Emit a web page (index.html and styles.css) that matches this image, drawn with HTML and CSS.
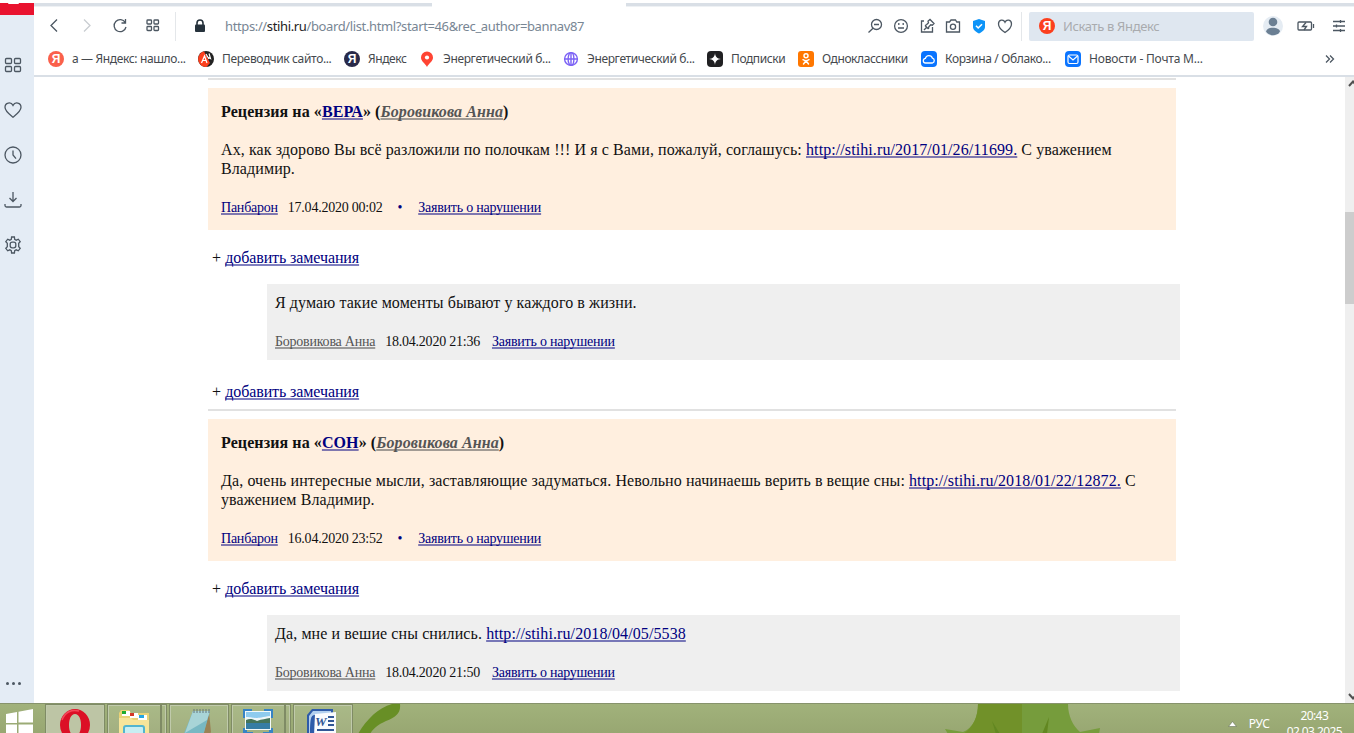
FILE: index.html
```
<!DOCTYPE html>
<html lang="ru">
<head>
    <meta charset="UTF-8">
    <title>Рецензии - Стихи.ру</title>
    <link rel="stylesheet" href="styles.css">
</head>
<body>
    <div class="browser">
        <!-- боковая панель -->
        <div class="sidebar">
            <div class="opera-btn"><span></span></div>
            <div class="side-icons">
                <svg class="icon" width="18" height="18" viewBox="0 0 18 18"><rect x="1.500" y="2.500" width="6" height="5" rx="1"/><rect x="10.500" y="2.500" width="6" height="5" rx="1"/><rect x="1.500" y="10.500" width="6" height="5" rx="1"/><rect x="10.500" y="10.500" width="6" height="5" rx="1"/></svg>
                <svg class="icon" width="18" height="18" viewBox="0 0 18 18"><path d="M9 16.200C6 13.800 1 10.300 1 6.300C1 1.400 7 .4 9 4.400C11 .4 17 1.400 17 6.300C17 10.300 12 13.800 9 16.200Z"/></svg>
                <svg class="icon" width="18" height="18" viewBox="0 0 18 18"><circle cx="9" cy="9" r="8"/><path d="M9 4.500V9l3 3.700"/></svg>
                <svg class="icon" width="18" height="18" viewBox="0 0 18 18"><path d="M9 1v9M5.500 7L9 10.500L12.500 7M1 13v1.500q0 1.500 1.500 1.500h13q1.500 0 1.500-1.500V13"/></svg>
                <svg class="icon" width="18" height="18" viewBox="0 0 18 18"><path d="M7.300 3.400L7.600 1h2.800l.3 2.400 1.500.8 2.100-1 1.900 2.500-1.500 1.600V10.700l1.500 1.600-1.900 2.500-2.100-1-1.500.8L10.400 17H7.600l-.3-2.400-1.500-.8-2.100 1-1.900-2.500 1.500-1.600V7.300L1.800 5.700 3.700 3.200l2.100 1z"/><rect x="6.200" y="6.200" width="5.600" height="5.600" rx="2"/></svg>
            </div>
            <div class="side-more"><i></i><i></i><i></i></div>
        </div>

        <div class="window">
            <div class="tab-strip"><span class="active-tab"></span></div>

            <div class="toolbar">
                <div class="nav">
                    <svg class="icon" width="16" height="18" viewBox="0 0 16 18"><path d="M11 2.500L5 8.500L11 14.500"/></svg>
                    <svg class="icon off" width="16" height="18" viewBox="0 0 16 18"><path d="M5 2.500L11 8.500L5 14.500"/></svg>
                    <svg class="icon" width="16" height="18" viewBox="0 0 16 18"><path d="M13.300 5.600A6 6 0 1 0 14 10M13.500 2v4h-4"/></svg>
                    <svg class="icon" width="16" height="18" viewBox="0 0 16 18"><rect x="2" y="3" width="4.500" height="4" rx=".8"/><rect x="9" y="3" width="4.500" height="4" rx=".8"/><rect x="2" y="9.500" width="4.500" height="4" rx=".8"/><rect x="9" y="9.500" width="4.500" height="4" rx=".8"/></svg>
                </div>
                <div class="address">
                    <svg width="12" height="14" viewBox="0 0 12 14"><path d="M3 6V4a3 3 0 0 1 6 0v2" fill="none" stroke="#26323c" stroke-width="1.600"/><rect x="1" y="5.500" width="10" height="7.500" rx="1" fill="#26323c"/></svg>
                    <span class="url">https://<b>stihi.ru</b>/board/list.html?start=46&amp;rec_author=bannav87</span>
                </div>
                <div class="page-actions">
                    <svg class="icon" width="16" height="16" viewBox="0 0 16 16"><circle cx="9.500" cy="6.500" r="5"/><path d="M6 10.200L1.500 14.500M7 6.500h5"/></svg>
                    <svg class="icon" width="16" height="16" viewBox="0 0 16 16"><circle cx="8" cy="8" r="6.400"/><path d="M5.800 5v2M10.200 5v2M5 10h6"/></svg>
                    <svg class="icon" width="16" height="16" viewBox="0 0 16 16"><path d="M5 3H2.500v11H13.500V9M6 7.500l3.500 3.500M5 12L7.700 9.200M6 7.500l1.500-.8 2-2-.5-1.500L11 1.500l4 4-1.700 1.700-1.500-.4-2 2-.3 2"/></svg>
                    <svg class="icon" width="16" height="16" viewBox="0 0 16 16"><path d="M1.500 4h3L6 2h4.500l1.300 2h2.700v10h-13z"/><circle cx="8" cy="8.800" r="2.600"/></svg>
                    <svg width="16" height="16" viewBox="0 0 16 16"><path d="M8 1l6 2v6c0 3-3 5-6 6.500C5 14 2 12 2 9V3z" fill="#0d94f8"/><path d="M5 7.800l2.200 2.200L11 6.300" fill="none" stroke="#fff" stroke-width="1.600"/></svg>
                    <svg class="icon" width="16" height="16" viewBox="0 0 16 16"><path d="M8 14.500C5 12.500 1.500 9.500 1.500 6C1.500 1.500 6.500 1 8 4.200C9.500 1 14.500 1.500 14.500 6C14.500 9.500 11 12.500 8 14.500Z"/></svg>
                </div>
                <div class="search">
                    <span class="ya">Я</span>
                    <span class="placeholder">Искать в Яндекс</span>
                </div>
                <div class="tools">
                    <svg width="20" height="20" viewBox="0 0 20 20"><circle cx="10" cy="10" r="10" fill="#e5ecf3"/><circle cx="10" cy="6" r="4.300" fill="#6b7f93"/><path d="M3 15.500c1-5 13-5 14 0c-3 5-11 5-14 0z" fill="#6b7f93"/></svg>
                    <svg class="icon" width="18" height="12" viewBox="0 0 18 12"><rect x="1" y="2" width="13.500" height="8" rx="1"/><path d="M16.500 4v4M9 2.500L5.500 6.500h4L7 10"/></svg>
                    <svg class="icon" width="14" height="14" viewBox="0 0 14 14"><path d="M1 2.500h12M1 7h12M1 11.500h12M8.500 1v3M4.500 5.500v3M8.500 10v3"/></svg>
                </div>
            </div>

            <div class="bookmarks">
                <div class="bookmark"><span class="ya light">Я</span><span class="b1">а — Яндекс: нашло...</span></div>
                <div class="bookmark">
                    <svg width="16" height="16" viewBox="0 0 16 16"><circle cx="8" cy="8" r="8" fill="#222"/><path d="M6 .3A8 8 0 0 0 8.500 16L12 12z" fill="#fc3f1d"/><path d="M3.500 12L6.500 5L9 12M4.500 9.500h3.500M8 3l3 5M11 2.500l1.500 5L8.700 5.500" fill="none" stroke="#fff" stroke-width="1.200"/></svg>
                    <span class="b2">Переводчик сайто...</span>
                </div>
                <div class="bookmark"><span class="ya dark">Я</span><span class="b3">Яндекс</span></div>
                <div class="bookmark">
                    <svg width="16" height="16" viewBox="0 0 16 16"><path d="M8 .5a6 6 0 0 1 6 6c0 4-4 5.500-6 9.500C6 12 2 10.500 2 6.500a6 6 0 0 1 6-6z" fill="#f43"/><circle cx="8" cy="6.500" r="2.100" fill="#fff"/></svg>
                    <span class="b4">Энергетический б...</span>
                </div>
                <div class="bookmark">
                    <svg width="16" height="16" viewBox="0 0 16 16" fill="none" stroke="#7b61f5" stroke-width="1.400"><circle cx="8" cy="8" r="6.400"/><ellipse cx="8" cy="8" rx="2.900" ry="6.400"/><path d="M1.600 8h12.800M8 1.500v13"/></svg>
                    <span class="b4">Энергетический б...</span>
                </div>
                <div class="bookmark">
                    <svg width="16" height="16" viewBox="0 0 16 16"><rect width="16" height="16" rx="4" fill="#202022"/><path d="M8 2c.4 4 2 5.600 6 6c-4 .4-5.600 2-6 6c-.4-4-2-5.600-6-6c4-.4 5.600-2 6-6z" fill="#fff"/></svg>
                    <span class="b6">Подписки</span>
                </div>
                <div class="bookmark">
                    <svg width="16" height="16" viewBox="0 0 16 16"><rect width="16" height="16" rx="3" fill="#ff7700"/><g fill="none" stroke="#fff" stroke-width="1.500" stroke-linecap="round"><circle cx="8" cy="4.800" r="2"/><path d="M5 8.700c2 1.300 4 1.300 6 0M8 9.800L5.500 13M8 9.800l2.500 3.200"/></g></svg>
                    <span class="b7">Одноклассники</span>
                </div>
                <div class="bookmark">
                    <svg width="16" height="16" viewBox="0 0 16 16"><rect width="16" height="16" rx="4" fill="#0a74ff"/><path d="M4.800 12a2.300 2.300 0 0 1-.4-4.600a3.600 3.600 0 0 1 7-.2A2.500 2.500 0 0 1 11.500 12z" fill="none" stroke="#fff" stroke-width="1.300"/></svg>
                    <span class="b8">Корзина / Облако...</span>
                </div>
                <div class="bookmark">
                    <svg width="16" height="16" viewBox="0 0 16 16"><rect width="16" height="16" rx="4" fill="#0a74ff"/><rect x="3" y="4" width="10" height="8.500" rx="1.500" fill="none" stroke="#fff" stroke-width="1.200"/><path d="M3.500 5L8 9l4.500-4" fill="none" stroke="#fff" stroke-width="1.200"/></svg>
                    <span class="b9">Новости - Почта М...</span>
                </div>
                <svg class="icon more" width="10" height="10" viewBox="0 0 10 10"><path d="M1 1.500L4.500 5L1 8.500M5 1.500L8.500 5L5 8.500"/></svg>
            </div>

            <div class="viewport">
                <div class="content">
                    <div class="rec">
                        <div class="rec-card">
                            <div class="rec-title">Рецензия на «<a href="#">ВЕРА</a>» (<a href="#" class="author"><em>Боровикова Анна</em></a>)</div>
                            <p class="rec-text">Ах, как здорово Вы всё разложили по полочкам !!! И я с Вами, пожалуй, соглашусь: <a href="#">http://stihi.ru/2017/01/26/11699.</a> С уважением<br>Владимир.</p>
                            <div class="meta"><a href="#">Панбарон</a><span class="date">17.04.2020 00:02</span><span class="dot">•</span><a href="#">Заявить о нарушении</a></div>
                        </div>
                        <div class="add">+ <a href="#">добавить замечания</a></div>
                        <div class="reply">
                            <p>Я думаю такие моменты бывают у каждого в жизни.</p>
                            <div class="meta"><a href="#" class="author">Боровикова Анна</a><span class="date">18.04.2020 21:36</span><a href="#">Заявить о нарушении</a></div>
                        </div>
                        <div class="add last">+ <a href="#">добавить замечания</a></div>
                    </div>

                    <div class="rec">
                        <div class="rec-card">
                            <div class="rec-title">Рецензия на «<a href="#">СОН</a>» (<a href="#" class="author"><em>Боровикова Анна</em></a>)</div>
                            <p class="rec-text">Да, очень интересные мысли, заставляющие задуматься. Невольно начинаешь верить в вещие сны: <a href="#">http://stihi.ru/2018/01/22/12872.</a> С<br>уважением Владимир.</p>
                            <div class="meta"><a href="#">Панбарон</a><span class="date">16.04.2020 23:52</span><span class="dot">•</span><a href="#">Заявить о нарушении</a></div>
                        </div>
                        <div class="add">+ <a href="#">добавить замечания</a></div>
                        <div class="reply">
                            <p>Да, мне и вешие сны снились. <a href="#">http://stihi.ru/2018/04/05/5538</a></p>
                            <div class="meta"><a href="#" class="author">Боровикова Анна</a><span class="date">18.04.2020 21:50</span><a href="#">Заявить о нарушении</a></div>
                        </div>
                    </div>
                </div>
                <div class="scrollbar">
                    <svg width="9" height="10" viewBox="0 0 9 10"><path d="M4 9L8 4.500L12 9" fill="none" stroke="#505050" stroke-width="2"/></svg>
                    <span class="thumb"></span>
                    <svg width="9" height="10" viewBox="0 0 9 10"><path d="M4 1L8 5.500L12 1" fill="none" stroke="#505050" stroke-width="2"/></svg>
                </div>
            </div>
        </div>
    </div>

    <!-- панель задач -->
    <div class="taskbar">
        <svg class="wallpaper" width="1354" height="30" viewBox="0 0 1354 30">
            <path d="M358 30C366 16 378 4 392 0h8c1 9-4 13-14 17c-9 4-13 8-16 13z" fill="#688f26"/>
            <path d="M978 0h90c0 12 5 22 12 28l20-4-1 6H948l-3-5 18 3c10-4 15-15 15-28z" fill="#769c3c"/>
            <path d="M978 0h44v30h-59c10-6 15-17 15-30z" fill="#719129"/>
            <path d="M992 17l8 13h-4zM1049 13l-7 17h5z" fill="#628721"/>
        </svg>
        <div class="start">
            <svg width="28" height="26" viewBox="0 0 28 26"><path d="M1 5l11-2v11H1zM13.500 2.700L28 0v13.500H13.500zM1 15.500h11V26H1zM13.500 15.500H28V26H13.500z" fill="#fff"/></svg>
        </div>
        <div class="task opera">
            <svg width="32" height="28" viewBox="0 0 32 28"><path d="M16 1a15 16 0 0 1 0 32a15 16 0 0 1 0-32zM16 6c-4 0-6 5-6 11s2 11 6 11s6-5 6-11s-2-11-6-11z" fill="#dc0f26" fill-rule="evenodd"/><path d="M3 12C6 4 13 1 20 3" fill="none" stroke="#f5485a" stroke-width="1.500"/></svg>
        </div>
        <div class="task group">
            <svg width="32" height="28" viewBox="0 0 32 28"><path d="M1 5l2-3h8l2 3h18v23H1z" fill="#ead276"/><path d="M4 3h8v5H4zM12 5h8v5h-8zM20 7h9v5h-9z" fill="#fff"/><path d="M4 3h4v3H4z" fill="#20ac30"/><path d="M12 5h4v3h-4z" fill="#d53728"/><path d="M21 7h5v3h-5z" fill="#25a6e2"/><path d="M1 10h12l2 2h16v16H1z" fill="#f7e59a"/><path d="M6 28v-8q0-2 2-2h16q2 0 2 2v8" fill="#c8eef2" stroke="#52b5cf" stroke-width="2"/></svg>
        </div>
        <div class="task">
            <svg width="32" height="28" viewBox="0 0 32 28"><path d="M27 4l2 20-2 4h-6z" fill="#9a8255"/><path d="M11 3h17l-7 25H1z" fill="#78b8c3"/><path d="M11 3h17l-3 9L3 25z" fill="#a8d4d7"/><path d="M12 1v4M15 1v4M18 1v4M21 1v4M24 1v4M27 1v4" stroke="#64777a"/></svg>
        </div>
        <div class="task group">
            <svg width="32" height="28" viewBox="0 0 32 28"><path d="M1 1h9v4H5v5H1zM31 1h-9v4h5v5h4zM1 28v-8h4v4h6v4zM31 28v-8h-4v4h-6v4z" fill="#3683c5"/><path d="M3 3h26v19H3z" fill="#f4fafa"/><path d="M4 4h24v9H4z" fill="#8ecbee"/><path d="M4 9c5 0 7 1 10 1s7-1 14-2v3c-6 2-9 1-12 2H4z" fill="#eef6f8"/><path d="M4 12c4-2 7-1 11 1c5-2 9-2 13-3v5H4z" fill="#44745a"/><path d="M4 15h24v6H4z" fill="#367da4"/></svg>
        </div>
        <div class="task">
            <svg width="32" height="28" viewBox="0 0 32 28"><path d="M6 1h21v27H1V7z" fill="#2e5ba9"/><path d="M7 3h18v4H9c-4 0-5 3-5 21H3V8z" fill="#b3d0ef"/><path d="M9 6l21-2v24H8z" fill="#f9fbfe"/><path d="M22 9h6M22 13h6M22 17h6M11 22h17M11 26h17" stroke="#315796" stroke-width="2"/><text x="9" y="18" class="word-letter">W</text></svg>
        </div>
        <div class="tray">
            <svg width="9" height="6" viewBox="0 0 9 6"><path d="M4.500 .5L8.500 5.500H.5z" fill="#fff" stroke="#68745a" stroke-width=".6"/></svg>
            <span class="lang">РУС</span>
            <div class="clock"><span>20:43</span><span>02.03.2025</span></div>
        </div>
    </div>
</body>
</html>
```
FILE: styles.css
```
* {
    box-sizing: border-box;
}

body {
    margin: 0;
    width: 1354px;
    height: 733px;
    overflow: hidden;
    display: flex;
    flex-direction: column;
    background-color: #fff;
    font-family: "Noto Sans", "Open Sans", sans-serif;
}

svg {
    display: block;
    flex-shrink: 0;
}

.icon {
    fill: none;
    stroke: #4c5762;
    stroke-width: 1.3;
}

.icon.off {
    stroke: #c9cdd1;
}

.browser {
    display: flex;
    height: 703px;
}

/* боковая панель */
.sidebar {
    width: 34px;
    margin-top: 3px;
    background-color: #e4ecf5;
    display: flex;
    flex-direction: column;
}

.opera-btn {
    height: 12px;
    background-color: #e9132f;
    overflow: hidden;
}

.opera-btn span {
    display: block;
    width: 11px;
    height: 1px;
    margin-left: 8px;
    background-color: #fff;
    border-radius: 0 0 6px 6px;
}

.side-icons {
    display: flex;
    flex-direction: column;
    gap: 27px;
    padding: 41px 0 0 4px;
}

.side-more {
    display: flex;
    gap: 3px;
    margin: auto 0 18px 6px;
}

.side-more i {
    width: 3px;
    height: 3px;
    border-radius: 50%;
    background-color: #4c5762;
}

/* верхняя часть окна */
.window {
    flex: 1;
    display: flex;
    flex-direction: column;
}

.tab-strip {
    height: 4px;
    margin-top: 3px;
    padding-left: 398px;
    background: linear-gradient(#d9dfe6 3px, #eef1f4 3px);
}

.active-tab {
    display: block;
    width: 194px;
    height: 4px;
    background-color: #fff;
}

.toolbar {
    height: 38px;
    display: flex;
    align-items: center;
}

.nav {
    width: 142px;
    height: 29px;
    display: flex;
    align-items: center;
    gap: 17px;
    padding-left: 12px;
    border-right: 1px solid #e4e7ea;
}

.address {
    width: 690px;
    display: flex;
    align-items: center;
    gap: 19px;
    padding-left: 18px;
}

.url {
    font-size: 13px;
    color: #788694;
    letter-spacing: -0.37px;
    white-space: nowrap;
}

.url b {
    font-weight: normal;
    color: #222;
}

.page-actions {
    width: 156px;
    height: 29px;
    display: flex;
    align-items: center;
    gap: 10px;
    padding-left: 1px;
    border-right: 1px solid #e4e7ea;
}

.search {
    width: 225px;
    height: 29px;
    margin-left: 7px;
    padding-left: 10px;
    display: flex;
    align-items: center;
    gap: 8px;
    background-color: #dfe7f0;
    border-radius: 2px;
}

.placeholder {
    font-size: 13px;
    letter-spacing: -0.35px;
    color: #a9abae;
}

.ya {
    width: 16px;
    height: 16px;
    flex-shrink: 0;
    border-radius: 50%;
    background-color: #fc3f1d;
    color: #fff;
    font: bold 12px/16px "Liberation Sans", Arial, sans-serif;
    text-align: center;
}

.ya.light {
    background-color: #fa604b;
}

.ya.dark {
    background-color: #292a49;
}

.tools {
    display: flex;
    align-items: center;
    gap: 14px;
    padding-left: 9px;
}

.tools svg:last-child {
    margin-left: 3px;
}

.bookmarks {
    height: 32px;
    display: grid;
    grid-template-columns: 150px 146px 75px 144px 144px 91px 123px 144px 260px 10px;
    align-items: center;
    padding: 0 0 3px 14px;
    border-bottom: 2px solid #d9dfe6;
}

.bookmark {
    display: flex;
    align-items: center;
    gap: 8px;
    font-size: 12px;
    line-height: 16px;
    color: #45494e;
    white-space: nowrap;
}

.b1, .b2, .b4, .b8 {
    letter-spacing: -0.36px;
}

.b3, .b6, .b7 {
    letter-spacing: -0.42px;
}

.b9 {
    letter-spacing: -0.2px;
}

/* страница */
.viewport {
    flex: 1;
    display: flex;
    justify-content: space-between;
    overflow: hidden;
}

.content {
    width: 972px;
    margin-left: 174px;
    padding-top: 1px;
    font-family: "Liberation Serif", "Times New Roman", serif;
    font-size: 16px;
    line-height: 19px;
    letter-spacing: 0.09px;
    color: #111;
    white-space: nowrap;
}

.content a {
    color: #000080;
    text-decoration-color: rgba(0, 0, 128, 0.5);
    text-decoration-thickness: 2px;
    text-underline-offset: 1px;
    text-decoration-skip-ink: none;
}

.content a.author {
    color: #555;
    text-decoration-color: rgba(85, 85, 85, 0.55);
}

.rec {
    height: 331px;
}

.rec::before {
    content: "";
    display: block;
    width: 968px;
    height: 2px;
    margin-bottom: 8px;
    background-color: #e1e1e1;
}

.rec-card {
    width: 968px;
    height: 142px;
    padding: 14px 13px 0;
    background-color: #ffefdf;
}

.rec-title {
    font-weight: bold;
    margin-bottom: 19px;
}

.rec-text {
    margin: 0 0 20px;
}

.meta {
    display: flex;
    font-size: 14px;
    letter-spacing: -0.23px;
}

.date {
    margin: 0 12px 0 10px;
}

.dot {
    margin: 0 16px 0 3px;
    color: #000080;
}

.add {
    height: 54px;
    padding: 18px 0 0 4px;
}

.add a {
    letter-spacing: -0.1px;
}

.reply {
    width: 913px;
    height: 76px;
    margin-left: 59px;
    padding: 9px 8px 0;
    background-color: #efefef;
}

.reply p {
    margin: 0 0 20px;
}

.add.last {
    height: 48px;
    padding-top: 22px;
}

.scrollbar {
    width: 9px;
    background-color: #efefef;
    display: flex;
    flex-direction: column;
}

.thumb {
    height: 92px;
    margin: 125px 0 auto;
    background-color: #cdcdcd;
}

/* панель задач */
.taskbar {
    position: relative;
    height: 30px;
    display: flex;
    overflow: hidden;
    background: linear-gradient(#a1b27b, #98a772);
    border-top: 1px solid #87936c;
}

.wallpaper {
    position: absolute;
    top: 0;
    left: 0;
}

.start {
    width: 45px;
    padding: 5px 0 0 5px;
}

.task {
    position: relative;
    width: 60px;
    height: 32px;
    margin-right: 2px;
    padding: 3px 0 0 12px;
    border: 1px solid #7f8b65;
    box-shadow: inset 1px 1px #c0caab, inset -1px 0 #c0caab;
    background-color: rgba(255, 255, 255, 0.1);
}

.task.opera {
    padding-left: 13px;
    background-color: #bdc5a5;
}

.task.group {
    padding-left: 10px;
}

.task.group::after {
    content: "";
    position: absolute;
    top: 0;
    right: 4px;
    height: 30px;
    border-left: 2px solid #7f8b65;
}

.word-letter {
    font: italic bold 13px "Liberation Serif", serif;
    fill: #315796;
}

.tray {
    position: relative;
    margin-left: auto;
    padding-right: 12px;
    display: flex;
    align-items: flex-start;
    color: #fff;
    font-size: 12px;
}

.tray > svg {
    margin-top: 17px;
}

.lang {
    margin: 12px 0 0 12px;
    line-height: 16px;
    letter-spacing: -0.2px;
}

.clock {
    margin-left: 17px;
    display: flex;
    flex-direction: column;
    align-items: center;
    line-height: 16px;
    padding-top: 4px;
    letter-spacing: -0.6px;
}
```
